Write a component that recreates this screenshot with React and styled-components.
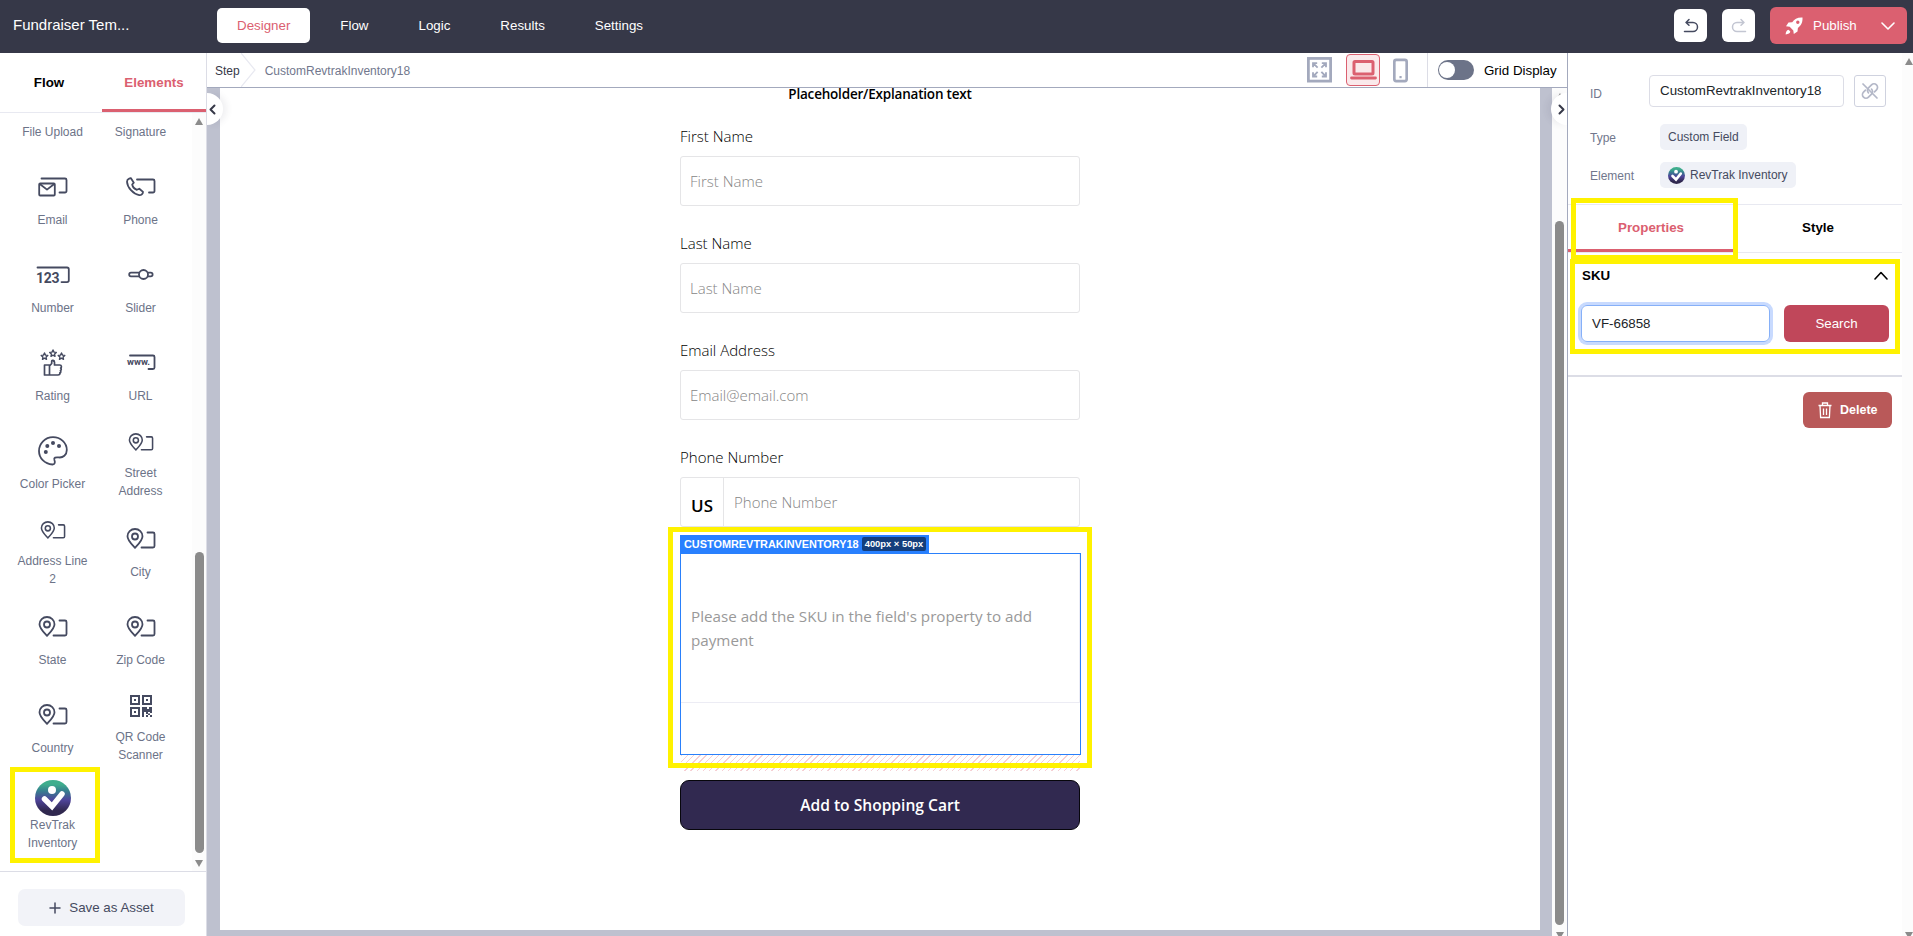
import React from 'react';
import styled, { createGlobalStyle } from 'styled-components';

const GlobalStyle = createGlobalStyle`
    * { box-sizing: border-box; }
    body {
    margin: 0;
    font-family: 'Liberation Sans', Arial, sans-serif;
    background: #fff;
    overflow: hidden;
    }
    button { font-family: inherit; cursor: pointer; }
`

const Page = styled.div`
    width: 1913px;
    height: 936px;
    display: flex;
    flex-direction: column;
    overflow: hidden;
    position: relative;
`

/* top bar */

const TopBar = styled.header`
    height: 53px;
    flex: none;
    display: flex;
    align-items: center;
    padding: 0 6px 2px 13px;
    background: #363848;
    color: #fff;
`
const Title = styled.div`
    width: 204px;
    font-size: 15px;
    line-height: 15px;
    padding-bottom: 2px;
`
const Nav = styled.nav`
    display: flex;
    gap: 10px;
    flex: 1;
`
const NavItem = styled.button`
    height: 35px;
    padding: 0 20px;
    border: none;
    border-radius: 5px;
    font-size: 13.33px;
    background: ${({ $active }) => ($active ? '#fff' : 'transparent')};
    color: ${({ $active }) => ($active ? '#db6070' : '#fff')};
`
const HistoryButton = styled.button`
    width: 33px;
    height: 33px;
    padding: 0;
    margin-right: 15px;
    display: flex;
    align-items: center;
    justify-content: center;
    border: none;
    border-radius: 6px;
    background: #fff;
    color: ${({ $muted }) => ($muted ? '#c3c6d2' : '#454a60')};
`
const PublishButton = styled.button`
    width: 137px;
    height: 37px;
    display: flex;
    align-items: center;
    padding: 0 12px 0 15px;
    border: none;
    border-radius: 6px;
    background: #db6070;
    color: #fff;
    font-size: 13.33px;
    span { margin-left: 10px; flex: 1; text-align: left; }
`

const Main = styled.div`
    flex: 1;
    display: flex;
    min-height: 0;
`

/* shared bits */

const Tab = styled.div`
    width: ${({ $width }) => $width}px;
    display: flex;
    align-items: center;
    justify-content: center;
    padding: ${({ $active }) => ($active ? 3 : 0)}px ${({ $shift }) => $shift || 0}px ${({ $lift }) => $lift || 0}px 0;
    font-size: 13.33px;
    font-weight: bold;
    color: ${({ $active }) => ($active ? '#db6070' : '#000')};
    border-bottom: ${({ $active }) => ($active ? '3px solid #db6070' : 'none')};
`
const Track = styled.div`
    width: ${({ $width }) => $width}px;
    flex: none;
    display: flex;
    flex-direction: column;
    align-items: center;
    background: #fcfcfc;
    padding: ${({ $pad }) => $pad};
    overflow: hidden;
`
const ArrowUp = styled.div`
    flex: none;
    border: 4px solid transparent;
    border-top: none;
    border-bottom: 7px solid #8b8b8b;
`
const ArrowDown = styled.div`
    flex: none;
    margin-bottom: ${({ $drop }) => -($drop || 0)}px;
    border: 4px solid transparent;
    border-bottom: none;
    border-top: 7px solid #8b8b8b;
`
const Thumb = styled.div`
    flex: none;
    width: 9px;
    height: ${({ $height }) => $height}px;
    margin: ${({ $margin }) => $margin};
    border-radius: 5px;
    background: #8b8b8b;
`
const Spacer = styled.div`
    flex: 1;
`

/* left panel */

const SidePanel = styled.aside`
    width: 207px;
    flex: none;
    display: flex;
    flex-direction: column;
    border-right: 1px solid #dcdde6;
`
const SideTabs = styled.div`
    height: 60px;
    flex: none;
    display: flex;
    border-bottom: 1px solid #e8e9f1;
`
const SideBody = styled.div`
    flex: 1;
    min-height: 0;
    display: flex;
    overflow: hidden;
`
const ElementGrid = styled.div`
    width: 192px;
    display: grid;
    grid-template-columns: 88px 88px;
    grid-auto-rows: 88px;
    margin-top: -46px;
    padding-left: 8.5px;
`
const ElementCell = styled.div`
    display: flex;
    flex-direction: column;
    align-items: center;
    justify-content: center;
    padding-top: ${({ $logo }) => ($logo ? 1 : 0)}px;
    color: #454a60;
`
const IconSlot = styled.div`
    height: ${({ $small }) => ($small ? 33 : 36)}px;
    margin-bottom: ${({ $logo }) => ($logo ? 0 : 5)}px;
    padding-bottom: ${({ $logo }) => ($logo ? 0 : 2)}px;
    display: flex;
    align-items: center;
    justify-content: center;
`
const ElementLabel = styled.div`
    width: 76px;
    text-align: center;
    font-size: 12px;
    line-height: 18px;
    color: #6c7388;
`
const SideFooter = styled.div`
    height: 65px;
    flex: none;
    border-top: 1px solid #dcdde6;
    padding: 17px 0 0 18px;
`
const SaveButton = styled.button`
    width: 167px;
    height: 37px;
    display: flex;
    align-items: center;
    justify-content: center;
    gap: 8px;
    border: none;
    border-radius: 7px;
    background: #f2f3f8;
    color: #454a60;
    font-size: 13.33px;
`

/* canvas */

const Workspace = styled.section`
    width: 1360px;
    flex: none;
    display: flex;
    flex-direction: column;
`
const CrumbBar = styled.div`
    height: 35px;
    flex: none;
    display: flex;
    align-items: center;
    padding-left: 8px;
    border-bottom: 1px solid #a3a9bd;
    background: #fff;
`
const Crumb = styled.span`
    padding-top: 1px;
    font-size: 12px;
    color: ${({ $dim }) => ($dim ? '#71778d' : '#363848')};
`
const CrumbArrow = styled.svg`
    margin: 0 7px 0 1px;
`
const DeviceButton = styled.div`
    width: ${({ $width }) => $width}px;
    height: 32px;
    margin-left: ${({ $gap }) => $gap}px;
    display: flex;
    align-items: center;
    justify-content: center;
    border: 1px solid ${({ $active }) => ($active ? '#db6070' : 'transparent')};
    border-radius: 4px;
    background: ${({ $active }) => ($active ? '#fae9eb' : 'transparent')};
    color: ${({ $active }) => ($active ? '#db6070' : '#a3a9bd')};
`
const GridToggle = styled.label`
    height: 34px;
    width: 140px;
    margin-left: 18px;
    display: flex;
    align-items: center;
    gap: 10px;
    padding-left: 10px;
    border-left: 1px solid #dcdde6;
    font-size: 13.33px;
    color: #000;
`
const Switch = styled.span`
    width: 36px;
    height: 20px;
    padding: 2px 1px;
    border-radius: 10px;
    background: #6c7388;
    &::before {
    content: '';
    display: block;
    width: 16px;
    height: 16px;
    border-radius: 50%;
    background: #fff;
    }
`
const Stage = styled.div`
    flex: 1;
    min-height: 0;
    display: flex;
    position: relative;
`
const Gutter = styled.div`
    flex: 1;
    display: flex;
    padding: 0 12px 6px 13px;
    background: #bec1cf;
`
const Sheet = styled.div`
    flex: 1;
    display: flex;
    justify-content: center;
    background: #fff;
`
const Handle = styled.div`
    position: absolute;
    top: 5px;
    ${({ $side }) => $side}: 0;
    width: 16px;
    height: 32px;
    padding: 11px 0 0 ${({ $side }) => ($side === 'left' ? 2 : 7)}px;
    border-radius: ${({ $side }) => ($side === 'left' ? '0 16px 16px 0' : '16px 0 0 16px')};
    background: #fff;
    box-shadow: ${({ $side }) => ($side === 'left' ? 4 : -4)}px 0 6px rgba(60, 64, 90, 0.08);
    color: #363848;
    svg { display: block; }
`

const Form = styled.div`
    width: 400px;
    font-family: 'Open Sans', 'Noto Sans', sans-serif;
    color: #000;
`
const Heading = styled.div`
    height: 33px;
    line-height: 12px;
    font-size: 13.5px;
    font-weight: 600;
    text-align: center;
    letter-spacing: -0.2px;
`
const Field = styled.div`
    height: 107px;
    padding-top: 4px;
`
const FieldLabel = styled.div`
    height: 31px;
    line-height: 23px;
    font-size: 15px;
    font-weight: 300;
`
const FieldBox = styled.div`
    height: 50px;
    display: flex;
    border: 1px solid #e5e5e7;
    border-radius: 3px;
    line-height: 48px;
    font-size: 15px;
    font-weight: 300;
    color: #858585;
`
const Country = styled.div`
    width: 43px;
    padding: 5px 0 0 10px;
    line-height: 46px;
    border-right: 1px solid #e5e5e7;
    font-size: 17px;
    font-weight: 600;
    color: #000;
`
const Hint = styled.span`
    padding-left: ${({ $inset }) => $inset}px;
`
const SelectedTag = styled.div`
    width: 249px;
    height: 18px;
    display: flex;
    align-items: center;
    margin-top: -14px;
    padding-left: 4px;
    background: #2880ff;
    color: #fff;
    font-family: 'Liberation Sans', Arial, sans-serif;
    font-size: 10.9px;
    font-weight: bold;
    white-space: nowrap;
`
const SizeBadge = styled.span`
    width: 64px;
    height: 14px;
    margin-left: auto;
    margin-right: 3px;
    border-radius: 2px;
    background: #143e7c;
    text-align: center;
    line-height: 14px;
    font-size: 9.4px;
`
const SelectedBox = styled.div`
    width: 401px;
    height: 202px;
    border: 1px solid #2a80fb;
`
const SkuNotice = styled.div`
    width: 399px;
    height: 149px;
    padding: 50px 30px 0 10px;
    border-right: 1px solid #ececf4;
    border-bottom: 1px solid #ececf4;
    font-size: 15.2px;
    line-height: 24px;
    color: #999;
`
const Hatch = styled.div`
    height: 16px;
    margin: 0 0 9px 1px;
    background: repeating-linear-gradient(135deg, #f6cfd3 0 1px, #fff 1px 4.4px);
`
const CartButton = styled.button`
    width: 400px;
    height: 50px;
    border: 1px solid #07060c;
    border-radius: 9px;
    background: #312950;
    color: #fff;
    font-family: 'Open Sans', 'Noto Sans', sans-serif;
    font-size: 15.6px;
    font-weight: 600;
`

/* properties panel */

const PropertyPanel = styled.aside`
    flex: 1;
    display: flex;
    border-left: 1px solid #a3a9bd;
`
const PropertyBody = styled.div`
    width: 334px;
`
const Details = styled.div`
    height: 152px;
    padding: 22px 16px 0 22px;
    border-bottom: 1px solid #e8e9f1;
`
const DetailRow = styled.div`
    height: ${({ $height }) => $height}px;
    display: flex;
    align-items: flex-start;
`
const DetailLabel = styled.div`
    width: ${({ $width }) => $width}px;
    padding-top: ${({ $top }) => $top}px;
    font-size: 12px;
    line-height: 14px;
    color: #71778d;
`
const IdInput = styled.div`
    width: 195px;
    height: 32px;
    padding-left: 10px;
    line-height: 29px;
    border: 1px solid #dcdde6;
    border-radius: 4px;
    font-size: 13.33px;
    color: #212529;
`
const LinkButton = styled.div`
    width: 32px;
    height: 32px;
    margin-left: 10px;
    display: flex;
    align-items: center;
    justify-content: center;
    border: 1px solid #cfd2df;
    border-radius: 3px;
    color: #b4b8c8;
`
const Chip = styled.div`
    height: 26px;
    padding: 0 8px;
    display: flex;
    align-items: center;
    gap: 5px;
    border-radius: 5px;
    background: #eff1f7;
    font-size: 12px;
    color: #454a60;
`
const PropertyTabs = styled.div`
    height: 48px;
    display: flex;
    border-bottom: 1px solid #e8e9f1;
`
const SkuSection = styled.div`
    height: 124px;
    border-bottom: 2px solid #dcdde6;
`
const SkuHeader = styled.div`
    height: 52px;
    display: flex;
    align-items: flex-start;
    justify-content: space-between;
    padding: 15px 14px 0;
    font-size: 13.33px;
    font-weight: bold;
    line-height: 15px;
    svg { margin-top: 3px; }
`
const SkuRow = styled.div`
    display: flex;
    gap: 14px;
    padding-left: 13px;
`
const SkuInput = styled.div`
    width: 189px;
    height: 37px;
    padding-left: 10px;
    line-height: 35px;
    border: 1px solid #86b0f8;
    border-radius: 6px;
    box-shadow: 0 0 0 3px #c8dafe;
    font-size: 13.33px;
    color: #212529;
`
const SearchButton = styled.button`
    width: 105px;
    height: 37px;
    border: none;
    border-radius: 6px;
    background: #c0475a;
    color: #fff;
    font-size: 13.33px;
`
const DeleteButton = styled.button`
    width: 89px;
    height: 36px;
    margin: 15px 0 0 235px;
    display: flex;
    align-items: center;
    padding: 0 0 0 15px;
    gap: 8px;
    border: none;
    border-radius: 6px;
    background: #b95959;
    color: #fff;
    font-size: 12.5px;
    font-weight: bold;
`

/* yellow outline laid over the page */
const Highlight = styled.div`
    position: absolute;
    left: ${({ $x }) => $x}px;
    top: ${({ $y }) => $y}px;
    width: ${({ $w }) => $w}px;
    height: ${({ $h }) => $h}px;
    border: 5px solid #fff200;
    pointer-events: none;
`

const line = {
  fill: 'none',
  stroke: 'currentColor',
  strokeWidth: 1.8,
  strokeLinecap: 'round',
  strokeLinejoin: 'round',
};

const EmailIcon = () => (
  <svg width="30" height="20" viewBox="0 0 30 20" {...line}>
    <path d="M3.5 1.5H27a1.5 1.5 0 0 1 1.5 1.5v11a1.5 1.5 0 0 1-1.5 1.5h-5.5" />
    <rect x="1.2" y="6.5" width="15.6" height="12" rx="1" />
    <path d="M1.8 7l7.2 5.6L16.2 7" />
  </svg>
);

const PhoneIcon = () => (
  <svg width="30" height="20" viewBox="0 0 30 20" {...line}>
    <path d="M11 2.5H27a1.5 1.5 0 0 1 1.5 1.5v10a1.5 1.5 0 0 1-1.5 1.5h-4" />
    <path d="M3.2 1.700L4.800 1.100L7.800 5.700L6.200 7.500C6.600 9.700 8.700 12 10.900 12.800L13.300 11.700L17 14.900C16.900 16.900 15.300 18.300 13.200 18.100C7.200 17.200 1.300 10.400 1 4.700C1 3.300 1.900 2.200 3.200 1.700Z" />
  </svg>
);

const NumberIcon = () => (
  <svg width="34" height="18" viewBox="0 0 34 18" {...line}>
    <path d="M1.5 1.5H31a1.8 1.8 0 0 1 1.8 1.8v11a1.8 1.8 0 0 1-1.8 1.8h-5.5" />
    <text x="0" y="16.5" fontSize="14" fontWeight="bold" fontFamily="Roboto, sans-serif" textLength="23.5" fill="currentColor" stroke="none">123</text>
  </svg>
);

const SliderIcon = () => (
  <svg width="26" height="13" viewBox="0 0 26 13" {...line}>
    <path d="M11 4.700H3a1.800 1.800 0 0 0 0 3.600h8" />
    <circle cx="15.500" cy="6.500" r="4.500" />
    <path d="M20 4.700h2.800a1.800 1.800 0 0 1 0 3.600H20" />
  </svg>
);

const star = 'l1 2.100l2.300.300l-1.700 1.600l.400 2.300l-2-1.100l-2 1.100l.400-2.300l-1.700-1.600l2.300-.300z';

const RatingIcon = () => (
  <svg width="26" height="28" viewBox="0 0 26 28" {...line} strokeWidth="1.400">
    <path d={`M4.500 4${star}`} />
    <path d={`M13 1${star}`} />
    <path d={`M21.500 4${star}`} />
    <path strokeWidth="1.700" d="M4.500 16h5v10h-5zM9.500 17l2.200-2.500V12.200c0-1.200 2.800-1.200 2.800 1V16h5.300c2 0 2 2.600.800 3c1 .700.800 2.300-.200 2.600c.700.800.400 2-.500 2.300c.300 1.300-.600 2.100-1.900 2.100H9.500" />
  </svg>
);

const UrlIcon = () => (
  <svg width="30" height="18" viewBox="0 0 30 18" {...line}>
    <path d="M4 1.500H27a1.500 1.500 0 0 1 1.500 1.500v10.500a1.500 1.500 0 0 1-1.500 1.500h-4.500" />
    <text x="1" y="10.800" fontSize="9.500" fontWeight="bold" fontFamily="Roboto, sans-serif" textLength="23" fill="currentColor" stroke="none">www.</text>
  </svg>
);

const PaletteIcon = () => (
  <svg width="30" height="30" viewBox="0 0 30 30" {...line}>
    <path d="M14.500 28.500C6.500 28 1 22 1 15C1 7.500 7 1.200 15 1.200c7.600 0 13.800 5.500 13.800 12.800c0 5-3.800 8-8.200 7.400c-3-.400-5 .200-4.200 2.600c.800 2 .700 4.300-1.900 4.500z" />
    <g fill="currentColor" stroke="none">
      <circle cx="7.800" cy="16" r="2" />
      <circle cx="9.300" cy="10" r="2" />
      <circle cx="15" cy="7" r="2" />
      <circle cx="21" cy="10" r="2" />
    </g>
  </svg>
);

const PinIcon = ({ small }) => (
  <svg width={small ? 26 : 30} height={small ? 18 : 21} viewBox="0 0 30 21" {...line}>
    <path d="M9 19.800C5.500 16 1.500 12.500 1.500 8.300C1.500 4.200 4.800 1 9 1s7.500 3.200 7.500 7.300C16.500 12.500 12.500 16 9 19.800z" />
    <circle cx="9" cy="8.500" r="3" />
    <path d="M21.500 4.500H27A1.500 1.500 0 0 1 28.500 6v12a1.500 1.500 0 0 1-1.500 1.500H15.500" />
  </svg>
);

const QrIcon = () => (
  <svg width="22" height="22" viewBox="0 0 22 22" fill="currentColor">
    <path fillRule="evenodd" d="M0 0h10v10H0zM2 2v6h6V2zM12 0h10v10H12zM14 2v6h6V2zM0 12h10v10H0zM2 14v6h6v-6z" />
    <path d="M4 4h2v2H4zM16 4h2v2h-2zM4 16h2v2H4zM12 12h5v2h2v-2h3v6h-2v-1h-2v2h-2v-2h-2v5h-2zM16 20h2v2h-2zM18 18.500h2V20h-2zM20 20h2v2h-2z" />
  </svg>
);

const RevTrakLogo = ({ size, id }) => (
  <svg width={size} height={size} viewBox="0 0 36 36">
    <defs>
      <linearGradient id={id} x1="0" y1="0" x2="0" y2="1">
        <stop offset="0.12" stopColor="#3fae8d" />
        <stop offset="0.3" stopColor="#37808f" />
        <stop offset="0.55" stopColor="#4f459b" />
        <stop offset="0.85" stopColor="#30284f" />
      </linearGradient>
    </defs>
    <circle cx="18" cy="18" r="18" fill={`url(#${id})`} />
    <circle cx="17" cy="10" r="4" fill="#fff" />
    <path d="M9.500 19L17 26.500L27 14" fill="none" stroke="#fff" strokeWidth="5.500" strokeLinecap="round" />
  </svg>
);

const UndoIcon = ({ flip }) => (
  <svg width="18" height="18" viewBox="0 0 18 18" {...line} strokeWidth="1.500" transform={flip ? 'scale(-1 1)' : undefined}>
    <path d="M7 2.500L4 5.500l3 2.800M4 5.500h7a4.500 4.500 0 0 1 0 9H2.500" />
  </svg>
);

const RocketIcon = () => (
  <svg width="18" height="18" viewBox="0 0 18 18" fill="#fff">
    <path fillRule="evenodd" d="M17.500.500C12.500.200 9.500 2 7.200 5.200L3.500 5.500L1 9.300l3.700.500l3.600 3.600l.500 3.700l3.700-2.600l.400-3.600C16 8.600 17.800 5.500 17.500.500zM12.800 3.600a1.700 1.700 0 1 1 0 3.400a1.700 1.700 0 0 1 0-3.400z" />
    <path d="M3.500 12.700c-1.800.300-2.600 1.800-2.900 4.700c2.900-.300 4.400-1.100 4.700-2.900z" />
  </svg>
);

const Chevron = ({ width, height, d, weight }) => (
  <svg width={width} height={height} viewBox={`0 0 ${width} ${height}`} {...line} strokeWidth={weight}>
    <path d={d} />
  </svg>
);

const ExpandIcon = () => (
  <svg width="27" height="28" viewBox="0 0 27 28" fill="none" stroke="currentColor">
    <rect x="1.500" y="1.500" width="24" height="24.500" strokeWidth="3" />
    <path strokeWidth="2" d="M6.500 11V6.500H11M6.500 6.500l5 5M16 6.500h4.500V11M20.500 6.500l-5 5M6.500 16.500V21H11M6.500 21l5-5M16 21h4.500v-4.500M20.500 21l-5-5" />
  </svg>
);

const LaptopIcon = () => (
  <svg width="27" height="20" viewBox="0 0 27 20" fill="none" stroke="currentColor">
    <rect x="4" y="1.500" width="19" height="12.500" rx="1" strokeWidth="3" />
    <path strokeWidth="2.800" strokeLinecap="round" d="M1.500 18h24" />
  </svg>
);

const MobileIcon = () => (
  <svg width="17" height="27" viewBox="0 0 17 27" fill="none" stroke="currentColor">
    <rect x="1.500" y="1.500" width="14" height="24" rx="2" strokeWidth="3" />
    <path strokeWidth="2.500" d="M7.300 21h2.500" />
  </svg>
);

const UnlinkIcon = () => (
  <svg width="18" height="18" viewBox="0 0 18 18" {...line} strokeWidth="1.700">
    <path d="M7.500 10.800a3.500 3.500 0 0 1 0-5L10.500 2.800a3.500 3.500 0 0 1 5 5L13.500 9.800" />
    <path d="M10.500 7.200a3.500 3.500 0 0 1 0 5L7.500 15.200a3.500 3.500 0 0 1-5-5L4.500 8.200" />
    <path d="M2 2l14 14" />
  </svg>
);

const TrashIcon = () => (
  <svg width="14" height="17" viewBox="0 0 14 17" fill="none" stroke="#fff" strokeWidth="1.300">
    <path d="M.500 3.500h13M4.500 3V1h5v2M2 3.500l.600 12h8.800l.600-12M5.500 6.500v6.500M8.500 6.500v6.500" />
  </svg>
);

const elements = [
  { label: 'File Upload', icon: null },
  { label: 'Signature', icon: null },
  { label: 'Email', icon: <EmailIcon /> },
  { label: 'Phone', icon: <PhoneIcon /> },
  { label: 'Number', icon: <NumberIcon /> },
  { label: 'Slider', icon: <SliderIcon /> },
  { label: 'Rating', icon: <RatingIcon /> },
  { label: 'URL', icon: <UrlIcon /> },
  { label: 'Color Picker', icon: <PaletteIcon /> },
  { label: 'Street Address', icon: <PinIcon small />, small: true },
  { label: 'Address Line 2', icon: <PinIcon small />, small: true },
  { label: 'City', icon: <PinIcon /> },
  { label: 'State', icon: <PinIcon /> },
  { label: 'Zip Code', icon: <PinIcon /> },
  { label: 'Country', icon: <PinIcon /> },
  { label: 'QR Code Scanner', icon: <QrIcon />, small: true },
  { label: 'RevTrak Inventory', icon: <RevTrakLogo size={36} id="logoLarge" />, logo: true },
];

const fields = [
  { label: 'First Name', hint: 'First Name' },
  { label: 'Last Name', hint: 'Last Name' },
  { label: 'Email Address', hint: 'Email@email.com' },
  { label: 'Phone Number', hint: 'Phone Number', country: 'US' },
];

const Header = () => (
  <TopBar>
    <Title>Fundraiser Tem...</Title>
    <Nav>
      {['Designer', 'Flow', 'Logic', 'Results', 'Settings'].map((name) => (
        <NavItem key={name} $active={name === 'Designer'}>{name}</NavItem>
      ))}
    </Nav>
    <HistoryButton><UndoIcon /></HistoryButton>
    <HistoryButton $muted><UndoIcon flip /></HistoryButton>
    <PublishButton>
      <RocketIcon />
      <span>Publish</span>
      <Chevron width={14} height={10} d="M1 2l6 6l6-6" weight={1.6} />
    </PublishButton>
  </TopBar>
);

const Sidebar = () => (
  <SidePanel>
    <SideTabs>
      <Tab $width={102} $shift={4}>Flow</Tab>
      <Tab $width={104} $active>Elements</Tab>
    </SideTabs>
    <SideBody>
      <ElementGrid>
        {elements.map(({ label, icon, small, logo }) => (
          <ElementCell key={label} $logo={logo}>
            <IconSlot $small={small} $logo={logo}>{icon}</IconSlot>
            <ElementLabel>{label}</ElementLabel>
          </ElementCell>
        ))}
      </ElementGrid>
      <Track $width={14} $pad="5px 0 4px">
        <ArrowUp />
        <Spacer />
        <Thumb $height={301} $margin="0 0 7px" />
        <ArrowDown />
      </Track>
    </SideBody>
    <SideFooter>
      <SaveButton>
        <Chevron width={12} height={12} d="M6 1v10M1 6h10" weight={1.5} />
        Save as Asset
      </SaveButton>
    </SideFooter>
  </SidePanel>
);

const Canvas = () => (
  <Workspace>
    <CrumbBar>
      <Crumb>Step</Crumb>
      <CrumbArrow width="17" height="34" viewBox="0 0 17 34" fill="none" stroke="#e8e9f1" strokeWidth="1.2">
        <path d="M0 0l14 17l-14 17" />
      </CrumbArrow>
      <Crumb $dim>CustomRevtrakInventory18</Crumb>
      <Spacer />
      <DeviceButton $width={27} $gap={0}><ExpandIcon /></DeviceButton>
      <DeviceButton $width={34} $gap={13} $active><LaptopIcon /></DeviceButton>
      <DeviceButton $width={17} $gap={12}><MobileIcon /></DeviceButton>
      <GridToggle>
        <Switch />
        Grid Display
      </GridToggle>
    </CrumbBar>
    <Stage>
      <Gutter>
        <Sheet>
          <Form>
            <Heading>Placeholder/Explanation text</Heading>
            {fields.map(({ label, hint, country }) => (
              <Field key={label}>
                <FieldLabel>{label}</FieldLabel>
                <FieldBox>
                  {country && <Country>{country}</Country>}
                  <Hint $inset={country ? 10 : 9}>{hint}</Hint>
                </FieldBox>
              </Field>
            ))}
            <SelectedTag>
              CUSTOMREVTRAKINVENTORY18
              <SizeBadge>400px × 50px</SizeBadge>
            </SelectedTag>
            <SelectedBox>
              <SkuNotice>Please add the SKU in the field's property to add payment</SkuNotice>
            </SelectedBox>
            <Hatch />
            <CartButton>Add to Shopping Cart</CartButton>
          </Form>
        </Sheet>
      </Gutter>
      <Track $width={15} $pad="5px 0 0">
        <ArrowUp />
        <Thumb $height={704} $margin="121px 0 7px" />
        <ArrowDown />
      </Track>
      <Handle $side="left">
        <Chevron width={7} height={11} d="M5.5 1.5l-4 4l4 4" weight={2} />
      </Handle>
      <Handle $side="right">
        <Chevron width={7} height={11} d="M1.5 1.5l4 4l-4 4" weight={2} />
      </Handle>
    </Stage>
  </Workspace>
);

const Properties = () => (
  <PropertyPanel>
    <PropertyBody>
      <Details>
        <DetailRow $height={49}>
          <DetailLabel $width={59} $top={12}>ID</DetailLabel>
          <IdInput>CustomRevtrakInventory18</IdInput>
          <LinkButton><UnlinkIcon /></LinkButton>
        </DetailRow>
        <DetailRow $height={38}>
          <DetailLabel $width={70} $top={7}>Type</DetailLabel>
          <Chip>Custom Field</Chip>
        </DetailRow>
        <DetailRow $height={26}>
          <DetailLabel $width={70} $top={7}>Element</DetailLabel>
          <Chip>
            <RevTrakLogo size={17} id="logoSmall" />
            RevTrak Inventory
          </Chip>
        </DetailRow>
      </Details>
      <PropertyTabs>
        <Tab $width={166} $lift={2} $active>Properties</Tab>
        <Tab $width={168} $lift={2}>Style</Tab>
      </PropertyTabs>
      <SkuSection>
        <SkuHeader>
          SKU
          <Chevron width={14} height={9} d="M1 8l6-6.5l6 6.5" weight={1.6} />
        </SkuHeader>
        <SkuRow>
          <SkuInput>VF-66858</SkuInput>
          <SearchButton>Search</SearchButton>
        </SkuRow>
      </SkuSection>
      <DeleteButton>
        <TrashIcon />
        Delete
      </DeleteButton>
    </PropertyBody>
    <Track $width={11} $pad="5px 0 0 3px">
      <ArrowUp />
      <Spacer />
      <ArrowDown $drop={3} />
    </Track>
  </PropertyPanel>
);

const App = () => (
  <Page>
    <GlobalStyle />
    <Header />
    <Main>
      <Sidebar />
      <Canvas />
      <Properties />
    </Main>
    <Highlight $x={10} $y={767} $w={90} $h={96} />
    <Highlight $x={668} $y={527} $w={424} $h={241} />
    <Highlight $x={1571} $y={198} $w={167} $h={62} />
    <Highlight $x={1570} $y={259} $w={330} $h={95} />
  </Page>
);

export default App;
